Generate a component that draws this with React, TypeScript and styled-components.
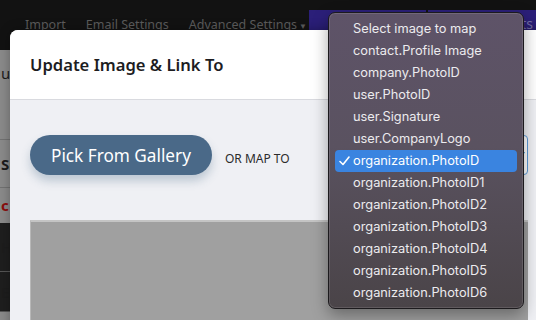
import React, { FC } from 'react';
import styled, { createGlobalStyle } from 'styled-components';

const GlobalStyle = createGlobalStyle`
    html, body {
        margin: 0;
        padding: 0;
        overflow: hidden;
    }
    body {
        font-family: 'Inter', 'Noto Sans', sans-serif;
    }
`;

const Page = styled.div`
    position: relative;
    width: 536px;
    height: 320px;
    overflow: hidden;
    background: #8a8a8a;
`;

const TopNav = styled.div`
    display: flex;
    align-items: flex-start;
    height: 50px;
    background: #121212;
`;

const NavLinks = styled.div`
    display: flex;
    gap: 20px;
    padding: 16px 0 0 25px;
    width: 284px;
`;

const NavLink = styled.span`
    font-family: 'Noto Sans', sans-serif;
    font-size: 12.5px;
    color: #5c5c5c;
    white-space: nowrap;
`;

const Caret = styled.span`
    font-size: 8px;
    margin-left: 2px;
`;

const PurpleGroup = styled.div`
    display: flex;
    gap: 2px;
    margin-top: 10px;
`;

const PurpleButton = styled.div<{ $w: number }>`
    width: ${(p) => p.$w}px;
    height: 32px;
    background: #2b1f79;
    color: #7873ad;
    font-family: 'Noto Sans', sans-serif;
    font-size: 14px;
    text-align: right;
    padding: 4px 3px 0 0;
    box-sizing: border-box;
    white-space: nowrap;
    overflow: hidden;
`;

const SideStrip = styled.div`
    width: 10px;
    display: flex;
    flex-direction: column;
    overflow: hidden;
    font-family: 'Noto Sans', sans-serif;
`;

const StripCell = styled.div<{ $h: number; $dark?: boolean; $color?: string; $bold?: boolean; $line?: boolean }>`
    height: ${(p) => p.$h}px;
    background: ${(p) => (p.$dark ? '#1e1e1e' : '#8a8a8a')};
    border-bottom: 1px solid ${(p) => (p.$dark ? '#555' : p.$line ? '#727272' : '#8a8a8a')};
    color: ${(p) => p.$color || '#1c1c1c'};
    font-weight: ${(p) => (p.$bold ? 700 : 400)};
    font-size: 15px;
    display: flex;
    align-items: center;
    padding-left: 1px;
    box-sizing: border-box;
`;

const Modal = styled.div`
    position: absolute;
    left: 10px;
    top: 30px;
    width: 540px;
    height: 320px;
    border-radius: 8px 0 0 0;
    overflow: hidden;
    background: #eff0f4;
    box-shadow: 0 0 12px rgba(0, 0, 0, 0.3);
`;

const ModalHeader = styled.div`
    height: 69px;
    background: #ffffff;
    border-bottom: 1px solid #d9dadf;
    display: flex;
    align-items: center;
    padding: 0 20px;
`;

const ModalTitle = styled.h2`
    margin: 0;
    font-family: 'Noto Sans', sans-serif;
    font-size: 16.6px;
    font-weight: 600;
    color: #1d1d1f;
`;

const ModalBody = styled.div`
    padding: 35px 20px 0 20px;
`;

const ActionRow = styled.div`
    display: flex;
    align-items: center;
    height: 40px;
`;

const GalleryButton = styled.button`
    height: 40px;
    padding: 0 21px;
    border: none;
    border-radius: 20px;
    background: #4a6988;
    color: #ffffff;
    font-family: 'Noto Sans', sans-serif;
    font-size: 17.2px;
    box-shadow: 0 6px 10px rgba(74, 105, 136, 0.3);
`;

const OrLabel = styled.span`
    margin-left: 13px;
    margin-top: 6px;
    font-family: 'Noto Sans', sans-serif;
    font-size: 12px;
    color: #2b2b2b;
`;

const MapSelect = styled.div`
    margin-left: auto;
    margin-right: 2px;
    width: 198px;
    height: 40px;
    border: 1px solid #5b9ad8;
    border-radius: 4px;
    background: #ffffff;
    box-sizing: border-box;
    display: flex;
    align-items: center;
    justify-content: flex-end;
    padding-right: 2px;
    font-size: 8px;
    color: #444;
`;

const ImageBox = styled.div`
    margin-top: 45px;
    height: 120px;
    width: 498px;
    background: #a0a0a0;
    border-top: 2px solid #c4c4c4;
    border-left: 1px solid #b8b8b8;
    box-sizing: border-box;
`;

const Menu = styled.ul`
    position: absolute;
    left: 328px;
    top: 12px;
    width: 196px;
    margin: 0;
    padding: 5px 6px 4px;
    box-sizing: border-box;
    list-style: none;
    border-radius: 7px;
    border: 1px solid #1c1a1d;
    background: linear-gradient(180deg, #5e5368 0%, #5a5260 45%, #4a4448 100%);
    box-shadow: inset 0 0 0 1px rgba(255, 255, 255, 0.12), 0 6px 16px rgba(0, 0, 0, 0.35);
`;

const MenuItem = styled.li<{ $active?: boolean }>`
    position: relative;
    height: 22px;
    line-height: 22px;
    padding-left: 18px;
    border-radius: 4px;
    font-family: 'Inter', 'Noto Sans', sans-serif;
    font-size: 12.8px;
    color: ${(p) => (p.$active ? '#ffffff' : '#ecebee')};
    background: ${(p) => (p.$active ? '#3a84e0' : 'transparent')};
    white-space: nowrap;
`;

const Check = styled.svg`
    position: absolute;
    left: 4px;
    top: 6px;
`;

const options = [
    'Select image to map',
    'contact.Profile Image',
    'company.PhotoID',
    'user.PhotoID',
    'user.Signature',
    'user.CompanyLogo',
    'organization.PhotoID',
    'organization.PhotoID1',
    'organization.PhotoID2',
    'organization.PhotoID3',
    'organization.PhotoID4',
    'organization.PhotoID5',
    'organization.PhotoID6',
];

const selected = 'organization.PhotoID';

const App: FC = () => {
    return (
        <Page>
            <GlobalStyle />
            <TopNav>
                <NavLinks>
                    <NavLink>Import</NavLink>
                    <NavLink>Email Settings</NavLink>
                    <NavLink>
                        Advanced Settings<Caret>▼</Caret>
                    </NavLink>
                </NavLinks>
                <PurpleGroup>
                    <PurpleButton $w={117} />
                    <PurpleButton $w={108}>Contacts</PurpleButton>
                </PurpleGroup>
            </TopNav>
            <SideStrip>
                <StripCell $h={47}>u</StripCell>
                <StripCell $h={43} $line />
                <StripCell $h={48} $bold $line>
                    Sr
                </StripCell>
                <StripCell $h={35} $color="#8c0d0d" $bold>
                    c
                </StripCell>
                <StripCell $h={49} $dark>
                    H
                </StripCell>
                <StripCell $h={40} $dark>
                    E
                </StripCell>
            </SideStrip>
            <Modal>
                <ModalHeader>
                    <ModalTitle>Update Image &amp; Link To</ModalTitle>
                </ModalHeader>
                <ModalBody>
                    <ActionRow>
                        <GalleryButton>Pick From Gallery</GalleryButton>
                        <OrLabel>OR MAP TO</OrLabel>
                        <MapSelect>▼</MapSelect>
                    </ActionRow>
                    <ImageBox />
                </ModalBody>
            </Modal>
            <Menu>
                {options.map((o) => (
                    <MenuItem key={o} $active={o === selected}>
                        {o === selected && (
                            <Check width="11" height="10" viewBox="0 0 11 10">
                                <path d="M1 5.5 L4 8.5 L10 1" fill="none" stroke="#fff" strokeWidth="1.6" strokeLinecap="round" strokeLinejoin="round" />
                            </Check>
                        )}
                        {o}
                    </MenuItem>
                ))}
            </Menu>
        </Page>
    );
};

export default App;
